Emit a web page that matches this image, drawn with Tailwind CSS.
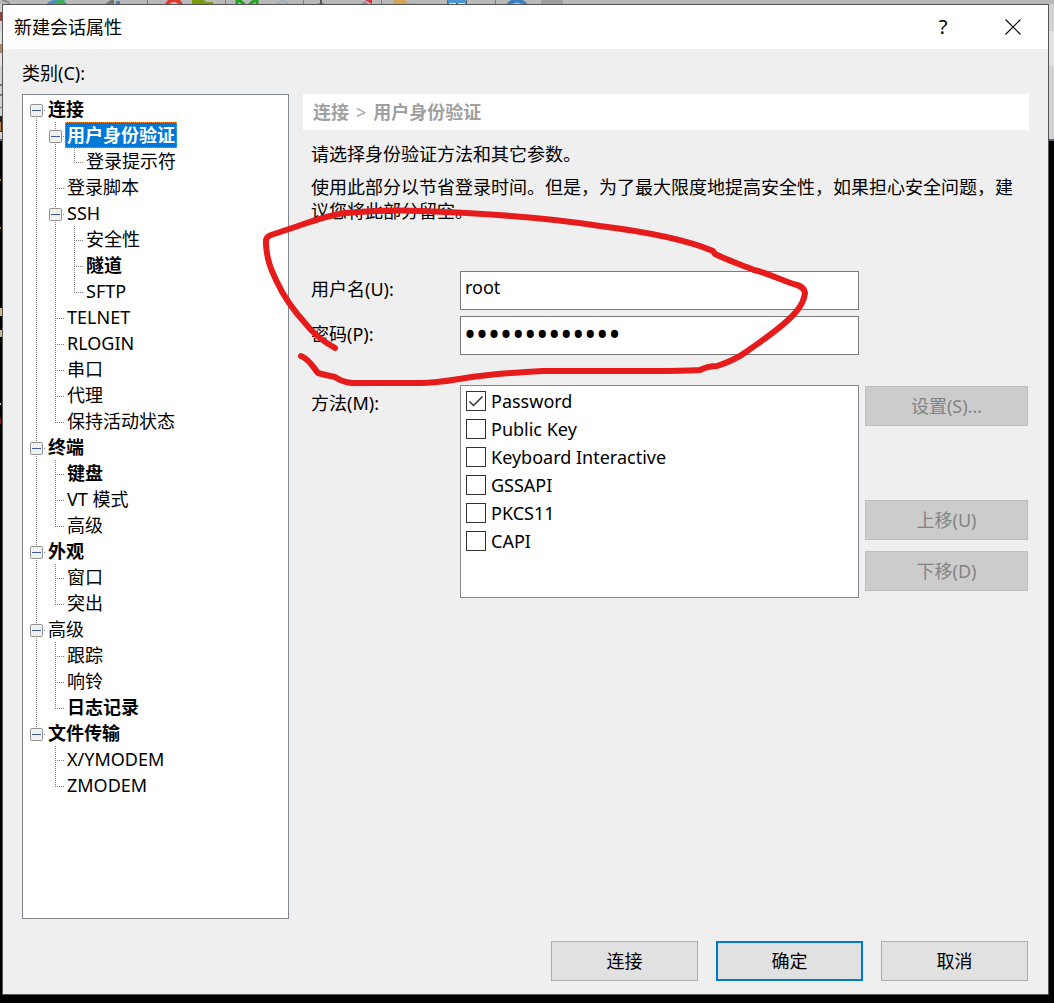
<!DOCTYPE html>
<html lang="zh-CN">
<head>
  <meta charset="UTF-8" />
  <meta name="viewport" content="width=device-width, initial-scale=1.0" />
  <title>新建会话属性</title>
  <script src="https://cdn.jsdelivr.net/npm/@tailwindcss/browser@4"></script>
</head>
<body class="bg-black font-['Noto_Sans','Noto_Sans_CJK_SC',sans-serif] text-[18px] leading-6 text-black">
  <div class="relative min-h-screen flex flex-col pt-1 pb-2 pl-[2px] pr-[5px]">

    <!-- Ventana principal detrás del diálogo -->
    <svg class="absolute left-0 top-0 w-full h-[430px]" aria-hidden="true">
      <rect width="100%" height="139" fill="#d2d2d2" />
      <rect y="31" width="100%" height="35" fill="#e2e2e2" />
      <rect y="139" width="100%" height="2" fill="#5a6272" />
      <rect width="100%" height="4" fill="#b9b9b9" />
      <path d="M2 0q6 1 8 5" stroke="#8a8a8a" stroke-width="2" fill="none" />
      <path d="M46 5q2-4 8-5h6q6 2 8 5z" fill="#4b8cc4" /><path d="M54 5l3-5h8l-2 5z" fill="#3fae5a" />
      <path d="M105 4l6-4h3v4z" fill="#777" /><path d="M116 1h4v3h-4z" fill="#3f86c6" />
      <path d="M167 5q2-5 7-5t7 5" fill="none" stroke="#e03a2c" stroke-width="4" />
      <path d="M192 0h12l2 2h7v3h-21z" fill="#7b9a10" />
      <path d="M237 5v-5M257 5v-5M239 0l6 5M255 0l-6 5" stroke="#1ea51e" stroke-width="3" fill="none" />
      <path d="M277 5q6-8 11 0" stroke="#a5afb9" stroke-width="3" fill="none" />
      <path d="M321 0v5" stroke="#555" stroke-width="2" /><path d="M318 4h6" stroke="#555" />
      <path d="M361 4l4-3 3 3z" fill="#8d8fa8" /><path d="M365 0h7v4z" fill="#d33" />
      <path d="M393 0h12l3 3h7v2h-22z" fill="#d3a35a" />
      <path d="M447 0h20v5h-20z" fill="#5a6a78" /><path d="M448 0h18v3h-18z" fill="#4c94cf" /><path d="M449 3h7v2h-7zM458 3h7v2h-7z" fill="#e4e4e4" />
      <path d="M508 5q9-9 18 0" stroke="#3d80c0" stroke-width="4" fill="none" />
      <rect x="541" y="0" width="22" height="6" rx="2" fill="#9d9d9d" />
      <g stroke="#7d7d7d"><path d="M147.500 0v4M225.500 0v4M303.500 0v4M381.500 0v4M495.500 0v4" /></g>
      <path d="M0 12h2v9h-2z" fill="#9a4040" /><path d="M0 44h2v9h-2z" fill="#a88868" />
      <path d="M0 84h2v2h-2zM0 94h2v2h-2zM0 107h2v1h-2z" fill="#777" /><path d="M0 116h2v16h-2z" fill="#222" /><path d="M0 122h1v9h-1z" fill="#c08040" />
      <path d="M0 179h1v2h-1zM0 227h1v2h-1z" fill="#b87830" /><path d="M0 308h2v8h-2zM0 330h2v7h-2z" fill="#c8b898" />
      <path d="M0 403h1v2h-1z" fill="#d8c8a0" /><path d="M0 418h1v6h-1z" fill="#801818" />
    </svg>

    <main class="relative flex-grow flex flex-col border border-[#555] bg-[#efefef]">
      <header class="flex items-center justify-between h-11 bg-white pl-[11px]">
        <h1>新建会话属性</h1>
        <div class="flex">
          <button type="button" aria-label="帮助" class="w-[70px] h-11 text-xl">?</button>
          <button type="button" aria-label="关闭" class="w-[70px] h-11 flex items-center justify-center">
            <svg class="w-4 h-4" viewBox="0 0 16 16" fill="none" stroke="#000" stroke-width="1.1"><path d="M.5.5l15 15M15.500.5l-15 15" /></svg>
          </button>
        </div>
      </header>

      <div class="flex-grow flex gap-[14px] px-[19px] pt-3">
        <!-- Árbol de categorías -->
        <section class="w-[267px] shrink-0 flex flex-col">
          <h2 id="categorias" class="mb-[9px]">类别(C):</h2>
          <ul id="arbol" role="tree" aria-labelledby="categorias" class="flex-grow border border-[#828790] bg-white pt-px pl-1"></ul>
        </section>

        <form id="formulario" class="flex-grow min-w-0 pt-[33px]">
          <p class="h-9 flex items-center bg-white px-[10px] text-[#a0a0a0]"><b>连接</b><span class="mx-[7px]">&gt;</span><b>用户身份验证</b></p>
          <div class="px-2 pt-3">
            <p>请选择身份验证方法和其它参数。</p>
            <p class="mt-[9px]">使用此部分以节省登录时间。但是，为了最大限度地提高安全性，如果担心安全问题，建议您将此部分留空。</p>
          </div>

          <div class="mt-12 pl-2 pr-px grid grid-cols-[149px_minmax(0,1fr)_163px] gap-y-[6px]">
            <label for="usuario" class="pt-[6px]">用户名(U):</label>
            <input id="usuario" type="text" value="root" class="h-[39px] mr-[6px] px-1 pb-2 border border-[#7a7a7a] bg-white outline-none" />
            <span></span>
            <label for="clave" class="pt-[6px]">密码(P):</label>
            <input id="clave" type="password" value="1234567890123" class="h-[39px] mr-[6px] px-[3px] pb-1 border border-[#7a7a7a] bg-white text-[32px] outline-none" />
          </div>

          <div class="mt-[30px] pl-2 pr-px grid grid-cols-[149px_minmax(0,1fr)_163px]">
            <span id="metodo" class="pt-[6px]">方法(M):</span>
            <div id="metodos" role="group" aria-labelledby="metodo" class="h-[213px] mr-[6px] pt-[1px] pl-[5px] border border-[#828790] bg-white"></div>
            <div class="flex flex-col pt-px">
              <button type="button" disabled class="h-10 border border-[#bfbfbf] bg-[#ccc] text-[#838383]">设置(S)...</button>
              <button type="button" disabled class="mt-[74px] h-10 border border-[#bfbfbf] bg-[#ccc] text-[#838383]">上移(U)</button>
              <button type="button" disabled class="mt-[11px] h-10 border border-[#bfbfbf] bg-[#ccc] text-[#838383]">下移(D)</button>
            </div>
          </div>
        </form>
      </div>

      <footer class="flex justify-end gap-[18px] pt-[22px] pb-[13px] pr-5">
        <button type="button" class="w-[147px] h-10 border border-[#adadad] bg-[#e1e1e1]">连接</button>
        <button type="submit" form="formulario" class="w-[147px] h-10 border-2 border-[#0078d7] bg-[#e1e1e1]">确定</button>
        <button type="button" class="w-[147px] h-10 border border-[#adadad] bg-[#e1e1e1]">取消</button>
      </footer>
    </main>

    <!-- Trazo rojo a mano alzada -->
    <svg class="absolute left-0 top-0 pointer-events-none" width="1054" height="420" fill="none" stroke="#e61c1c" stroke-width="6" stroke-linecap="round" stroke-linejoin="round" aria-hidden="true">
      <path d="M335 348C326 343 315 336 305 323C295 312 283 295 277 282C272 271 267 262 266 244Q265 237 271 235L292 228C310 222 328 215 345 213C375 210 415 210 445 212C490 214 550 218 600 226C640 231 685 239 713 251L715 254C727 260 742 265 754 270C768 273 783 281 797 285Q804 287 805 293Q804 303 795 313C783 327 764 339 746 352C738 358 726 363 717 366Q708 366 700 370C680 371 667 371 655 371L543 371C520 372 498 374 480 376C455 379 443 383 420 383L352 383Q342 382 335 377Q325 375 318 373C313 367 309 359 301 356" />
    </svg>
  </div>

  <script>
    // [guías, nombre, negrita, seleccionado]
    // f/m/e = caja (primera, media, final), t = rama, l = última rama, i = línea, . = vacío
    const nodos = [
      ['f', '连接', true],
      ['im', '用户身份验证', true, true],
      ['iil', '登录提示符'],
      ['it', '登录脚本'],
      ['im', 'SSH'],
      ['iit', '安全性'],
      ['iit', '隧道', true],
      ['iil', 'SFTP'],
      ['it', 'TELNET'],
      ['it', 'RLOGIN'],
      ['it', '串口'],
      ['it', '代理'],
      ['il', '保持活动状态'],
      ['m', '终端', true],
      ['it', '键盘', true],
      ['it', 'VT 模式'],
      ['il', '高级'],
      ['m', '外观', true],
      ['it', '窗口'],
      ['il', '突出'],
      ['m', '高级'],
      ['it', '跟踪'],
      ['it', '响铃'],
      ['il', '日志记录', true],
      ['e', '文件传输', true],
      ['.t', 'X/YMODEM'],
      ['.l', 'ZMODEM'],
    ];

    const caja = '<rect x="3.5" y="8.5" width="12" height="12" rx="1" fill="#f0f0f0" stroke="#919191"/><path d="M5 14.5h9" stroke="#3c5aa8"/><path d="M17 14.5h1" stroke="#808080"/>';
    const linea = (d) => `<path d="${d}" stroke="#808080" stroke-dasharray="1 1" shape-rendering="crispEdges"/>`;
    const guias = {
      f: linea('M9.5 22v4') + caja,
      m: linea('M9.5 0v26') + caja,
      e: linea('M9.5 0v8') + caja,
      i: linea('M9.5 0v26'),
      t: linea('M9.5 0v26') + linea('M9 14.5h9'),
      l: linea('M9.5 0v14') + linea('M9 14.5h9'),
      '.': '',
    };

    document.getElementById('arbol').innerHTML = nodos.map(([g, nombre, negrita, activo]) => `
      <li role="treeitem" aria-level="${g.length}" aria-selected="${!!activo}" class="flex h-[26px]">
        ${[...g].map((c) => `<svg class="w-[19px] h-[26px] shrink-0" fill="none" aria-hidden="true">${guias[c]}</svg>`).join('')}
        <span class="px-[2px] leading-[26px] whitespace-nowrap ${negrita ? 'font-bold' : ''} ${activo ? 'bg-[#0078d7] text-white outline-1 outline-dotted outline-[#ff8728] -outline-offset-1' : ''}">${nombre}</span>
      </li>`).join('');

    const metodos = ['Password', 'Public Key', 'Keyboard Interactive', 'GSSAPI', 'PKCS11', 'CAPI'];
    document.getElementById('metodos').innerHTML = metodos.map((m, i) => `
      <label class="flex items-center gap-[5px] h-7">
        <span class="relative flex">
          <input type="checkbox" ${i === 0 ? 'checked' : ''} class="peer appearance-none w-5 h-5 border border-[#333] bg-white" />
          <svg class="absolute left-0 top-0 hidden peer-checked:block w-5 h-5 pointer-events-none" fill="none" stroke="#333" stroke-width="1.5"><path d="M3.5 10.5l4 4 9-9" /></svg>
        </span>
        ${m}
      </label>`).join('');
  </script>
</body>
</html>
